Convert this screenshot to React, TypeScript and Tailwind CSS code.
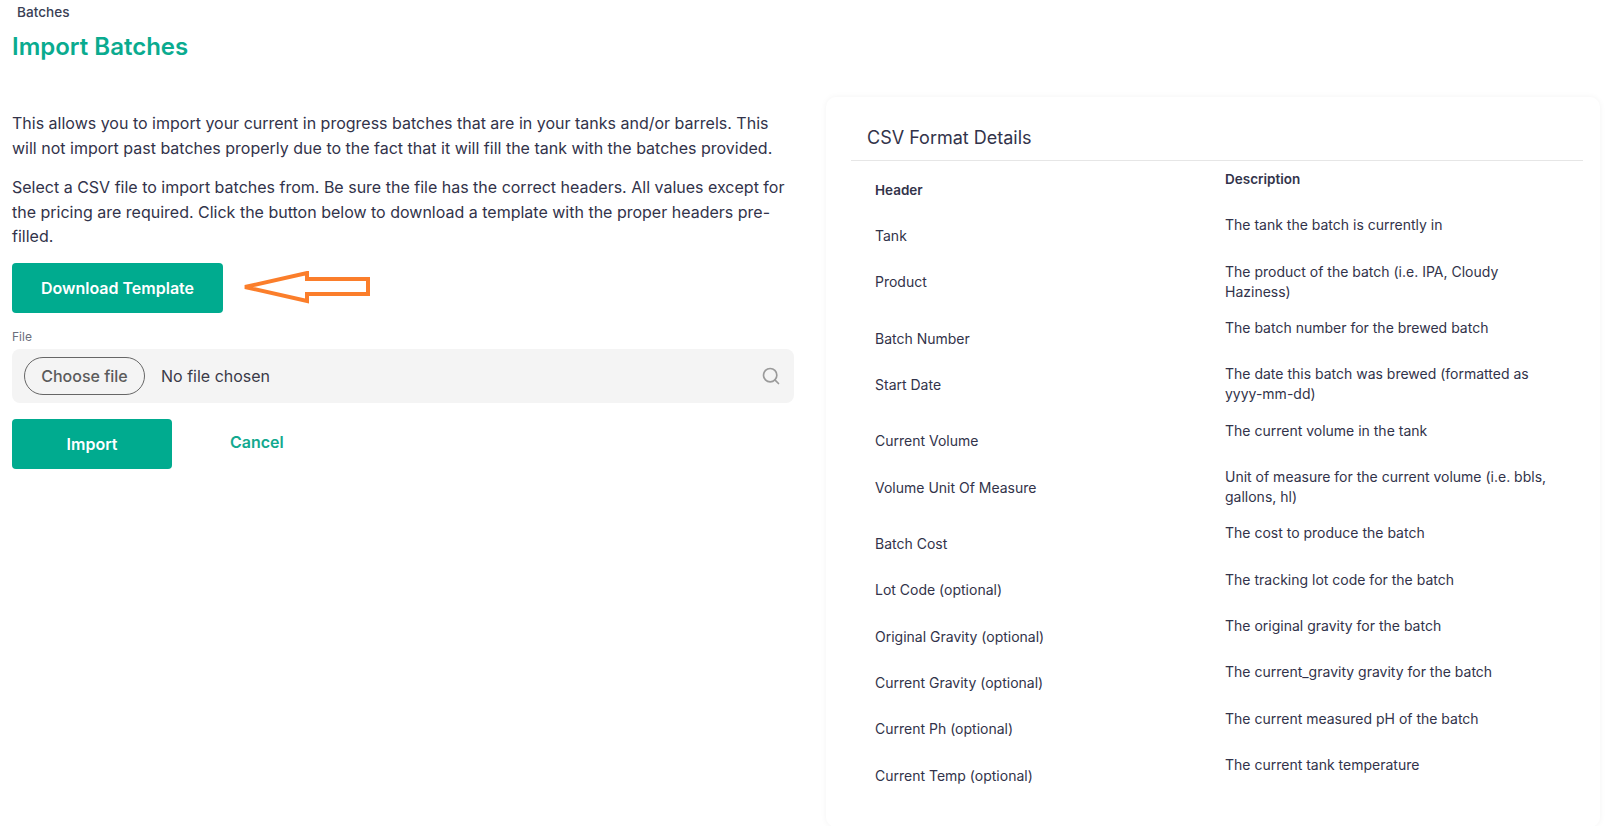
import { Search } from "lucide-react";

const rows: [string, string][] = [
  ["Tank", "The tank the batch is currently in"],
  ["Product", "The product of the batch (i.e. IPA, Cloudy Haziness)"],
  ["Batch Number", "The batch number for the brewed batch"],
  ["Start Date", "The date this batch was brewed (formatted as yyyy-mm-dd)"],
  ["Current Volume", "The current volume in the tank"],
  ["Volume Unit Of Measure", "Unit of measure for the current volume (i.e. bbls, gallons, hl)"],
  ["Batch Cost", "The cost to produce the batch"],
  ["Lot Code (optional)", "The tracking lot code for the batch"],
  ["Original Gravity (optional)", "The original gravity for the batch"],
  ["Current Gravity (optional)", "The current_gravity gravity for the batch"],
  ["Current Ph (optional)", "The current measured pH of the batch"],
  ["Current Temp (optional)", "The current tank temperature"],
];

export default function App() {
  return (
    <div className="h-[826px] w-[1606px] overflow-hidden bg-white font-['Inter',sans-serif] text-[#32334a]">

      {/* Page header */}
      <div className="pl-3 pt-[4px]">
        <p className="pl-[5px] text-[13.6px] font-medium leading-[16px] text-[#3a3f55]">Batches</p>
        <h1 className="mt-[10px] text-[24px] font-semibold leading-[34px] text-[#0aab8f]">Import Batches</h1>
      </div>

      <div className="mt-[33px] flex items-start">

        {/* Left column */}
        <div className="ml-3 mt-[14px] w-[782px]">
          <p className="text-[16px] leading-[24.6px]">
            This allows you to import your current in progress batches that are in your tanks and/or barrels. This will not import past batches properly due to the fact that it will fill the tank with the batches provided.
          </p>
          <p className="mt-[15px] text-[16px] leading-[24.6px]">
            Select a CSV file to import batches from. Be sure the file has the correct headers. All values except for the pricing are required. Click the button below to download a template with the proper headers pre-filled.
          </p>

          <div className="mt-[14px] flex items-center">
            <button className="h-[50px] w-[211px] rounded-[4px] bg-[#00ab8f] text-[16px] font-semibold text-white">
              Download Template
            </button>
            <svg width="130" height="34" viewBox="0 0 130 34" fill="none" className="ml-[20px]">
              <path d="M2 16 L64 2 L64 8 L125 8 L125 23 L64 23 L64 30 Z" stroke="#fb7e2b" strokeWidth="4" strokeLinejoin="miter" />
            </svg>
          </div>

          <p className="mt-[17px] text-[12px] leading-[14px] text-[#6b6e7b]">File</p>
          <div className="mt-[5px] flex h-[54px] items-center rounded-[8px] bg-[#f4f4f4] pl-3 pr-[13px]">
            <button className="h-[38px] w-[121px] rounded-full border border-[#666] text-[16px] font-medium text-[#5b5b5b]">
              Choose file
            </button>
            <span className="ml-4 text-[16px] text-[#3a3a48]">No file chosen</span>
            <Search className="ml-auto size-5 text-[#9a9a9a]" strokeWidth={2} />
          </div>

          <div className="mt-4 flex items-start">
            <button className="h-[50px] w-[160px] rounded-[4px] bg-[#00ab8f] text-[16px] font-semibold text-white">
              Import
            </button>
            <span className="ml-[58px] mt-[12px] text-[16px] font-semibold leading-[22px] text-[#13a98f]">Cancel</span>
          </div>
        </div>

        {/* CSV format card */}
        <div className="ml-[32px] h-[730px] w-[774px] rounded-[10px] pl-[25px] pr-[17px] pt-[27px] shadow-[0_0_6px_rgba(0,0,0,0.05)]">
          <h2 className="h-[37px] border-b border-[#e6e6e6] pl-4 text-[18px] leading-[27px]">CSV Format Details</h2>
          <table className="w-full table-fixed text-[14px] leading-[20px]">
            <tbody>
              <tr>
                <th className="w-[374px] pb-[8px] pl-6 pt-[19px] text-left align-top text-[13.5px] font-semibold">Header</th>
                <th className="pb-[8px] pt-[8px] text-left align-top text-[13.5px] font-semibold">Description</th>
              </tr>
              {rows.map(([name, text]) => (
                <tr key={name}>
                  <td className="pb-[8.35px] pl-6 pt-[18px] align-top">{name}</td>
                  <td className="pb-[8.9px] pr-7 pt-[7.4px] align-top">{text}</td>
                </tr>
              ))}
            </tbody>
          </table>
        </div>

      </div>
    </div>
  );
}
